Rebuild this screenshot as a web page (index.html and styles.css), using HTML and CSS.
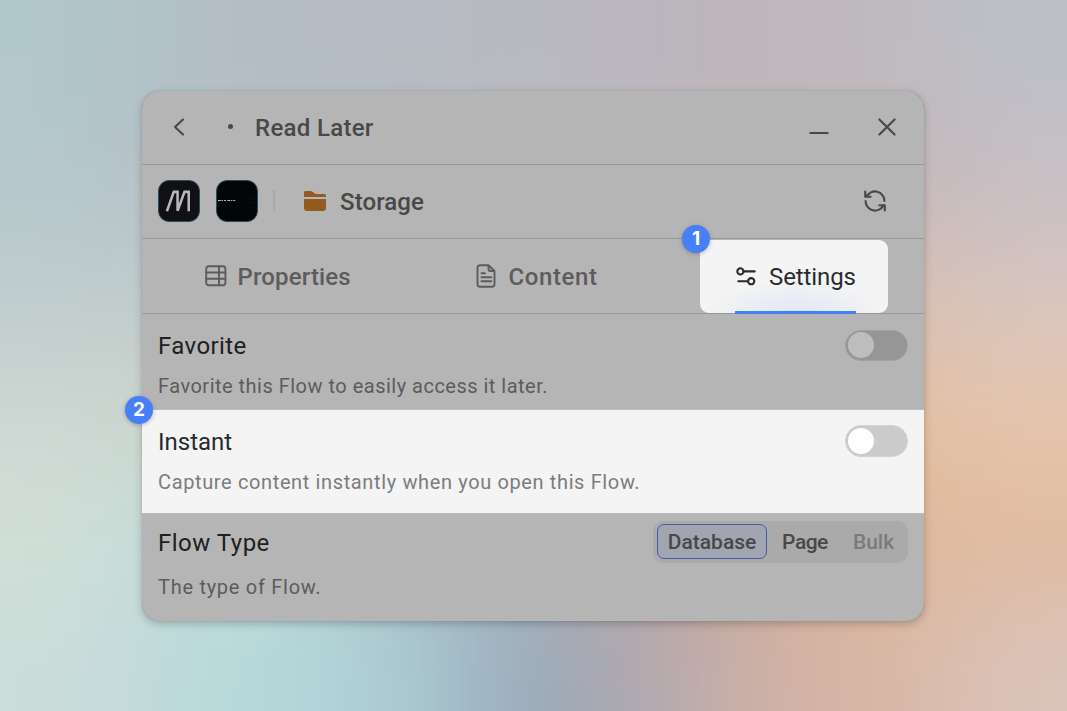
FILE: index.html
```
<!DOCTYPE html>
<html lang="en">
<head>
<meta charset="utf-8">
<title>Read Later</title>
<link rel="stylesheet" href="styles.css">
</head>
<body>
<svg class="backdrop" viewBox="0 0 1067 711" preserveAspectRatio="none" aria-hidden="true">
  <defs><filter id="soft" filterUnits="userSpaceOnUse" x="-200" y="-200" width="1467" height="1111" color-interpolation-filters="sRGB"><feGaussianBlur stdDeviation="58"/></filter></defs>
  <g filter="url(#soft)">
    <path fill="#b1c8cb" d="M-200-200H120V120H-200z"/><path fill="#b2bfc7" d="M119-200H240V120H119z"/><path fill="#b4bbc4" d="M238-200H357V120H238z"/><path fill="#b6bac2" d="M356-200H475V120H356z"/><path fill="#b8b9c0" d="M474-200H594V120H474z"/><path fill="#bbb6be" d="M593-200H712V120H593z"/><path fill="#beb6ba" d="M711-200H831V120H711z"/><path fill="#bebabf" d="M830-200H949V120H830z"/><path fill="#bdc0c7" d="M948-200H1267V120H948z"/>
    <path fill="#b5c7cc" d="M-200 119H120V238H-200z"/><path fill="#b6c0c6" d="M119 119H475V238H119z"/><path fill="#beb8bd" d="M474 119H831V238H474z"/><path fill="#c4b7b9" d="M830 119H949V238H830z"/><path fill="#c7bfc4" d="M948 119H1267V238H948z"/>
    <path fill="#c0cccd" d="M-200 237H120V356H-200z"/><path fill="#bfcbcb" d="M119 237H594V356H119z"/><path fill="#d8bfb3" d="M593 237H949V356H593z"/><path fill="#d7c5bf" d="M948 237H1267V356H948z"/>
    <path fill="#cdd7d3" d="M-200 355H120V474H-200z"/><path fill="#cdd5cb" d="M119 355H594V474H119z"/><path fill="#e3c0a2" d="M593 355H949V474H593z"/><path fill="#e6c6ad" d="M948 355H1267V474H948z"/>
    <path fill="#d1dfd7" d="M-200 473H120V593H-200z"/><path fill="#c3dcd9" d="M119 473H357V593H119z"/><path fill="#a6b9c4" d="M356 473H594V593H356z"/><path fill="#bfa49c" d="M593 473H771V593H593z"/><path fill="#dfb798" d="M770 473H949V593H770z"/><path fill="#e1ba9e" d="M948 473H1267V593H948z"/>
    <path fill="#cbdcd9" d="M-200 592H120V911H-200z"/><path fill="#bddadb" d="M119 592H240V911H119z"/><path fill="#b1d7da" d="M238 592H357V911H238z"/><path fill="#abc9d0" d="M356 592H475V911H356z"/><path fill="#98a8b9" d="M474 592H594V911H474z"/><path fill="#b4a9af" d="M593 592H712V911H593z"/><path fill="#d1b1a5" d="M711 592H831V911H711z"/><path fill="#d9b7a5" d="M830 592H949V911H830z"/><path fill="#dac3b9" d="M948 592H1267V911H948z"/>
  </g>
</svg>
<main class="stage">
  <section class="card">
    <header class="bar titlebar">
      <svg class="back" viewBox="0 0 12 18"><path d="M10 1.5 2 9l8 7.5"/></svg>
      <span class="dot"></span>
      <h1 class="title">Read Later</h1>
      <svg class="minimize" viewBox="0 0 20 4"><path d="M1.3 2h17.4"/></svg>
      <svg class="close" viewBox="0 0 18 18"><path d="m1.4 1.4 15.2 15.2M16.6 1.4 1.4 16.6"/></svg>
    </header>
    <div class="bar storage">
      <span class="app"><svg class="app-art" viewBox="0 0 42 42"><path class="mark" d="M8.3 31.8 15.5 11.4h4V31.3L26.8 11.4h4.4V31.8"/></svg></span>
      <span class="app dark"><svg class="app-art" viewBox="0 0 42 42"><path class="lettering" d="M1 20.5h19"/><path class="speck" d="M38.5 18v1m0 3v1"/></svg></span>
      <span class="divider"></span>
      <svg class="folder" viewBox="0 0 22 20"><path fill="#935b20" d="M0 6V1.5Q0 0 1.5 0h5q1 0 2 .8l2 1.5q.8.6 1.8.6h8q1.7 0 1.7 1.5V6zM0 8h22v9q0 3-3 3H3q-3 0-3-3z"/></svg>
      <span class="storage-name">Storage</span>
      <svg class="sync" viewBox="0 0 22 22"><path d="M1.2 1.5v5.3h5.5M2.5 6.8A9.4 9.4 0 0 1 20.4 11M20.8 20.5v-5.3h-5.5M19.5 15.2A9.4 9.4 0 0 1 1.6 11"/></svg>
    </div>
    <nav class="bar tabs">
      <a class="tab properties"><svg class="tab-icon" viewBox="0 0 22 22"><rect x="1.2" y="1.2" width="19.2" height="19" rx="2.5"/><path d="M1.2 7.5h19.2M1.2 13.8h19.2M14 1.2v19"/></svg><span class="label">Properties</span></a>
      <a class="tab content"><svg class="tab-icon doc" viewBox="0 0 20 24"><path d="M12.5 1.2H4Q1.5 1.2 1.5 3.7v16.6q0 2.5 2.5 2.5h12q2.5 0 2.5-2.5V7zM12.5 1.2V5q0 2 2 2h4M5.5 9.3H9M5.5 13.3h9.8M5.5 17.3h9.8"/></svg><span class="label">Content</span></a>
      <a class="tab settings active"><svg class="tab-icon" viewBox="0 0 22 22"><circle cx="5.4" cy="5.4" r="3.1"/><path d="M8.5 5.4h11.2M3.3 15.2h9.6"/><circle cx="16.2" cy="15.2" r="3.1"/></svg><span class="label">Settings</span></a>
      <span class="badge one">1</span>
    </nav>
    <div class="row favorite">
      <div class="copy"><h2 class="name">Favorite</h2><p class="hint">Favorite this Flow to easily access it later.</p></div>
      <span class="switch"></span>
    </div>
    <div class="row instant">
      <div class="copy"><h2 class="name">Instant</h2><p class="hint">Capture content instantly when you open this Flow.</p></div>
      <span class="switch"></span>
      <span class="badge two">2</span>
    </div>
    <div class="row flow-type">
      <div class="copy"><h2 class="name">Flow Type</h2><p class="hint">The type of Flow.</p></div>
      <div class="segments"><span class="segment selected">Database</span><span class="segment page">Page</span><span class="segment bulk">Bulk</span></div>
    </div>
  </section>
</main>
</body>
</html>
```
FILE: styles.css
```
* { box-sizing: border-box; }
body { margin: 0; width: 1067px; height: 711px; overflow: hidden; background: #c4c8c8; font-family: Roboto, "Noto Sans", sans-serif; }
.backdrop { position: absolute; inset: 0; width: 1067px; height: 711px; }
.stage { position: relative; padding: 91px 0 0 142px; }
.card { width: 782px; height: 530px; display: flex; flex-direction: column; border-radius: 18px; background: #b5b5b5; box-shadow: 0 3px 9px rgba(0,0,0,.22), 0 0 1px rgba(0,0,0,.3); color: #484848; }
.bar { display: flex; align-items: center; flex: none; border-bottom: 1px solid #999; }
.bar svg { fill: none; flex: none; stroke: #484848; stroke-width: 2.1; stroke-linecap: round; stroke-linejoin: round; }
h1, h2, p { margin: 0; font-weight: 400; }
.titlebar { height: 74px; padding: 0 28px 2px 31px; }
.back { width: 12px; height: 18px; }
.dot { width: 5px; height: 5px; border-radius: 50%; background: #484848; margin: 0 22px 0 43px; }
.title { font-size: 24px; font-weight: 500; line-height: 30px; letter-spacing: .3px; flex: 1; padding-top: 2px; }
.minimize { width: 20px; height: 4px; margin: 13px 49px 0 0; }
.close { width: 18px; height: 18px; }
.storage { height: 74px; padding: 0 38px 2px 16px; }
.app { width: 42px; height: 42px; border: 1px solid #2c4b5e; border-radius: 11px; background: #101015; margin-right: 16px; overflow: hidden; }
.app.dark { background: #030606; }
.app-art { display: block; width: 40px; height: 40px; }
.bar .app-art { stroke-linecap: butt; stroke-linejoin: miter; }
.mark { stroke: #b7b7b8; stroke-width: 2.7; }
.lettering { stroke: #bbb; stroke-width: 1.2; stroke-dasharray: 3 .8 1.5 1 2 1.5; }
.speck { stroke: #333; stroke-width: 1; }
.divider { width: 2px; height: 21px; background: #a8a8a8; margin: 0 29px 0 -1px; }
.bar .folder { width: 22px; height: 20px; stroke: none; }
.storage-name { font-size: 24px; font-weight: 500; letter-spacing: .1px; margin-left: 14px; flex: 1; padding-top: 2px; }
.sync { width: 22px; height: 22px; }
.tabs { height: 75px; position: relative; color: #5c5c5c; font-size: 24px; font-weight: 500; }
.tab { display: flex; align-items: center; gap: 11px; }
.properties { padding-left: 62.5px; width: 333.5px; }
.properties .label { letter-spacing: .15px; padding-top: 2px; }
.content .label { letter-spacing: .6px; padding-top: 2px; }
.content { width: 224.5px; }
.bar .tab-icon { width: 22px; height: 22px; stroke: #5c5c5c; stroke-width: 1.9; }
.bar .doc { width: 20px; height: 24px; }
.content { gap: 13px; }
.settings { width: 188px; height: 73px; margin-top: 1px; padding-left: 35px; gap: 12px; border-radius: 9px; color: #292c2f; font-weight: 400; background: radial-gradient(ellipse 90px 32px at 95px 73px, #e0e7f7 0%, #e9edf5 50%, #f4f4f4 100%) #f4f4f4; position: relative; }
.settings .label { letter-spacing: -.1px; }
.bar .settings .tab-icon { stroke: #292c2f; stroke-width: 2.1; }
.settings::after { content: ""; position: absolute; left: 35px; bottom: -1px; width: 121px; height: 3px; background: #467ff7; }
.badge { position: absolute; width: 28px; height: 28px; border-radius: 50%; background: #467ff7; color: #fff; font: 700 19px/28px Inter, sans-serif; text-align: center; box-shadow: 0 1px 4px rgba(0,0,0,.25); }
.one { left: 540px; top: -14px; }
.two { left: -17px; top: -14.5px; }
.row { display: flex; justify-content: space-between; align-items: flex-start; padding: 16px 16px 0 16px; position: relative; flex: none; }
.name { color: #202020; font-size: 24px; line-height: 32px; letter-spacing: .4px; }
.hint { color: #5c5c5c; font-size: 20px; line-height: 28px; margin-top: 10px; letter-spacing: .49px; }
.favorite { height: 96px; border-bottom: 1px solid #bdbdbd; }
.instant { height: 104px; background: #f4f4f4; border-bottom: 1px solid #b9b9b9; }
.instant .name { color: #292a2d; letter-spacing: 0; }
.instant .hint { color: #7c7c7c; letter-spacing: .63px; }
.switch { width: 63px; height: 31px; border: 1px solid #a1a1a1; border-radius: 16px; background: #969696; padding: 1px 0 0 2px; }
.switch::before { content: ""; display: block; width: 26px; height: 26px; border-radius: 50%; background: #bdbdbd; }
.instant .switch { border-color: #d2d2d2; background: #cbcbcb; height: 32px; margin-top: -1px; padding-top: 2px; }
.instant .switch::before { background: #fff; }
.flow-type { flex: 1; padding-top: 13px; }
.flow-type .name { letter-spacing: .5px; }
.flow-type .hint { margin-top: 14px; letter-spacing: .72px; }
.segments { display: flex; align-items: center; width: 255px; height: 42px; margin-top: -6px; border-radius: 11px; padding: 0 4px 1px; background: #aaa; font-size: 21px; font-weight: 500; }
.segment { line-height: 34px; text-align: center; }
.selected { width: 110px; height: 35px; border: 1px solid #435ca0; border-radius: 7px; background: #a1a5b2; line-height: 34px; }
.page { width: 76px; letter-spacing: -.5px; }
.bulk { width: 61px; color: #7b7b7b; }
```
